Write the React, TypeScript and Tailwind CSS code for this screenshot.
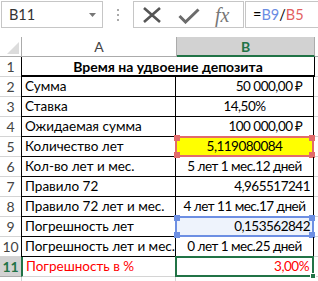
import React from "react";

type Row = {
  n: number;
  a: string;
  b: string;
  align: "right" | "center";
  pr?: string;
  kind?: "red" | "blue" | "green";
};

const rows: Row[] = [
  { n: 2, a: "Сумма", b: "50 000,00 ₽", align: "right", pr: "pr-[10px]" },
  { n: 3, a: "Ставка", b: "14,50%", align: "center" },
  { n: 4, a: "Ожидаемая сумма", b: "100 000,00 ₽", align: "right", pr: "pr-[10px]" },
  { n: 5, a: "Количество лет", b: "5,119080084", align: "center", kind: "red" },
  { n: 6, a: "Кол-во лет и мес.", b: "5 лет 1 мес.12 дней", align: "center" },
  { n: 7, a: "Правило 72", b: "4,965517241", align: "right", pr: "pr-[3px]" },
  { n: 8, a: "Правило 72 лет и мес.", b: "4 лет 11 мес.17 дней", align: "center" },
  { n: 9, a: "Погрешность лет", b: "0,153562842", align: "right", pr: "pr-[3px]", kind: "blue" },
  { n: 10, a: "Погрешность лет и мес.", b: "0 лет 1 мес.25 дней", align: "center" },
  { n: 11, a: "Погрешность в %", b: "3,00%", align: "right", pr: "pr-[4px]", kind: "green" },
];

function Handles({ color }: { color: string }) {
  const base = "absolute w-[6px] h-[6px] " + color;
  return (
    <>
      <div className={base + " -left-[3px] -top-[3px]"} />
      <div className={base + " -right-[3px] -top-[3px]"} />
      <div className={base + " -left-[3px] -bottom-[3px]"} />
      <div className={base + " -right-[3px] -bottom-[3px]"} />
    </>
  );
}

export default function App() {
  return (
    <div className="w-[318px] h-[281px] bg-white overflow-hidden font-['Lato','Liberation_Sans',sans-serif] text-[13.5px] text-black">
      {/* Toolbar */}
      <div className="flex items-start h-[37px] pt-[1px]">
        <div className="ml-[1px] w-[102px] h-[27px] border border-[#c6c6c6] flex items-center pl-[7px] pr-[6px] text-[14.5px] text-[#333]">
          <span className="flex-1">B11</span>
          <svg width="7" height="4" viewBox="0 0 7 4">
            <path d="M0 0 H7 L3.5 4 Z" fill="#777" />
          </svg>
        </div>
        <div className="w-[30px] h-[27px] flex flex-col items-center justify-center gap-[3px]">
          <div className="w-[2px] h-[2px] bg-[#aaa]" />
          <div className="w-[2px] h-[2px] bg-[#aaa]" />
          <div className="w-[2px] h-[2px] bg-[#aaa]" />
        </div>
        <div className="w-[111px] h-[27px] border border-[#c6c6c6] flex items-center">
          <svg width="20" height="16" viewBox="0 0 20 16" className="ml-[8px]">
            <path d="M2 1 L18 15 M18 1 L2 15" stroke="#555" strokeWidth="2.6" />
          </svg>
          <svg width="22" height="16" viewBox="0 0 22 16" className="ml-[16px] mt-[3px]">
            <path d="M1.5 8 L7.5 14 L20.5 1.5" stroke="#6b6b6b" strokeWidth="3" fill="none" />
          </svg>
          <span className="ml-[15px] text-[#777] italic text-[20px] font-['Liberation_Serif',serif] leading-none">
            fx
          </span>
        </div>
        <div className="ml-[1px] flex-1 h-[27px] border border-[#c6c6c6] border-r-0 flex items-center pl-[7px] text-[14.5px]">
          <span>=</span>
          <span className="text-[#6b8de3]">B9</span>
          <span>/</span>
          <span className="text-[#e35f5f]">B5</span>
        </div>
      </div>

      {/* Column headers */}
      <div className="flex h-[20px] text-[#444] text-[14px]">
        <div className="w-[22px] h-[20px] border-r border-b border-[#ababab] relative bg-white">
          <svg width="12" height="12" viewBox="0 0 12 12" className="absolute right-[2px] bottom-[2px]">
            <path d="M12 0 V12 H0 Z" fill="#dcdcdc" />
          </svg>
        </div>
        <div className="w-[155px] h-[20px] border-r border-b border-[#ababab] flex items-center justify-center">A</div>
        <div className="w-[138px] h-[20px] bg-[#d2d2d2] border-b-2 border-[#217346] border-r border-r-[#ababab] flex items-center justify-center font-bold text-[#217346]">
          B
        </div>
        <div className="flex-1 h-[20px] border-b border-[#ababab]" />
      </div>

      {/* Row 1 */}
      <div className="flex h-[20px]">
        <div className="w-[21px] h-[20px] border-b border-[#d4d4d4] flex items-center justify-center text-[#444] text-[14px]">1</div>
        <div className="w-[294px] h-[20px] border-l border-r border-black border-b-2 flex items-center justify-center font-bold text-[14px]">
          Время на удвоение депозита
        </div>
        <div className="flex-1 h-[20px] border-b border-[#d4d4d4]" />
      </div>

      {rows.map((r) => {
        const sel = r.n === 11;
        return (
          <div key={r.n} className="flex h-[20px]">
            <div
              className={
                "w-[21px] h-[20px] flex items-center justify-center text-[14px] " +
                (sel
                  ? "bg-[#d2d2d2] text-[#217346] font-bold border-b border-[#ababab]"
                  : "text-[#444] border-b border-[#d4d4d4]")
              }
            >
              {r.n}
            </div>
            <div
              className={
                "w-[155px] h-[20px] border-l border-b border-r flex items-center pl-[3px] whitespace-nowrap overflow-hidden " +
                (sel ? "border-l-[#217346] border-l-2 border-b-[#d4d4d4] border-r-black text-[#ff0000] pl-[2px]" : "border-black")
              }
            >
              {r.a}
            </div>
            <div
              className={
                "relative w-[138px] h-[20px] border-b border-r flex items-center whitespace-nowrap tracking-[-0.5px] " +
                (r.align === "center" ? "justify-center " : "justify-end ") +
                (r.pr ?? "") +
                (r.kind === "red" ? " bg-[#ffff00]" : "") +
                (r.kind === "blue" ? " bg-[#eef3fc]" : "") +
                (sel ? " border-[#d4d4d4] text-[#ff0000]" : " border-black")
              }
            >
              {r.b}
              {r.kind === "red" && (
                <div className="absolute -left-[1px] -top-[1px] -right-[1px] -bottom-[1px] border-2 border-[#e26b6b]">
                  <Handles color="bg-[#e26b6b]" />
                </div>
              )}
              {r.kind === "blue" && (
                <div className="absolute -left-[1px] -top-[1px] -right-[1px] -bottom-[1px] border-2 border-[#6d8fe3]">
                  <Handles color="bg-[#6d8fe3]" />
                </div>
              )}
              {r.kind === "green" && (
                <div className="absolute -left-[1px] -top-[1px] -right-[1px] -bottom-[1px] border-2 border-[#217346]">
                  <div className="absolute -right-[4px] -bottom-[4px] w-[6px] h-[6px] bg-[#217346] border border-white" />
                </div>
              )}
            </div>
            <div className="flex-1 h-[20px] border-b border-[#d4d4d4]" />
          </div>
        );
      })}
      <div className="flex h-[4px]">
        <div className="w-[21px] h-[4px]" />
        <div className="w-[155px] h-[4px] border-l border-r border-[#d4d4d4]" />
      </div>
    </div>
  );
}
